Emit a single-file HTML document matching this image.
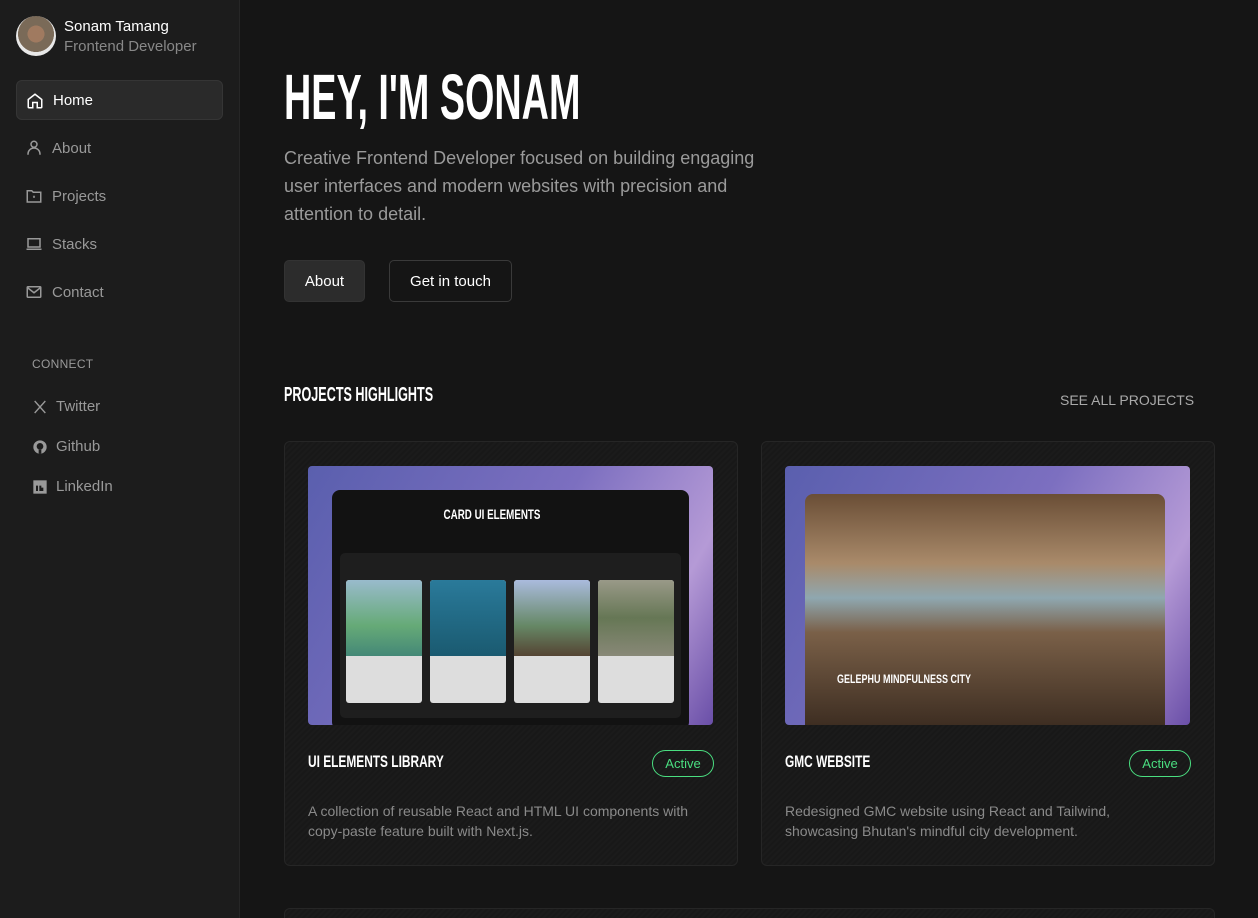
<!DOCTYPE html>
<html><head><meta charset="utf-8"><style>
*{box-sizing:border-box;margin:0;padding:0}
html,body{width:1258px;height:918px;overflow:hidden}
body{background:#151515;font-family:"Liberation Sans",sans-serif;color:#eee;position:relative}
.side{position:absolute;left:0;top:0;width:240px;height:918px;background:#1c1c1c;border-right:1px solid #262626}
.av{position:absolute;left:16px;top:16px;width:40px;height:40px;border-radius:50%;background:radial-gradient(circle at 50% 45%,#a07a60 0 28%,#7a6a58 29% 60%,#e8e8e8 61%)}
.nm{position:absolute;left:64px;top:18px;font-size:15px;color:#fff}
.rl{position:absolute;left:64px;top:38px;font-size:15px;color:#888}
.nav{position:absolute;left:16px;width:207px;height:40px;border-radius:6px;font-size:15px;color:#999;display:flex;align-items:center;padding-left:36px}
.nav.on{background:#2a2a2a;border:1px solid #353535;color:#fff}
.nav svg{position:absolute;left:9px;top:11px}
.cn{position:absolute;left:32px;top:357px;font-size:12px;color:#999;letter-spacing:.3px}
.so{position:absolute;left:56px;font-size:15px;color:#999}
.so svg{position:absolute;left:-24px;top:1px}
.cond{font-weight:bold;display:inline-block;transform-origin:left top;white-space:nowrap}
h1{position:absolute;left:284px;top:60px;font-size:64px;color:#fff;transform:scaleX(.59)}
.p{position:absolute;left:284px;top:144px;width:495px;font-size:18px;line-height:28px;color:#9a9a9a}
.b{position:absolute;top:260px;height:42px;border-radius:5px;font-size:15px;color:#fff;display:flex;align-items:center;justify-content:center}
.ph{position:absolute;left:284px;top:384px;font-size:20px;color:#fff;transform:scaleX(.63)}
.sa{position:absolute;left:1060px;top:392px;font-size:14px;color:#aaa}
.card{position:absolute;top:441px;width:454px;height:425px;border:1px solid #262626;border-radius:6px;background:repeating-linear-gradient(135deg,#1b1b1b 0 2px,#181818 2px 4px)}
.img{position:absolute;left:23px;top:24px;width:405px;height:259px;border-radius:4px;overflow:hidden}
.ct{position:absolute;left:23px;top:310px;font-size:17px;color:#fff;transform:scaleX(.7)}
.bd{position:absolute;left:367px;top:308px;width:62px;height:27px;border:1px solid #4ade80;border-radius:14px;color:#4ade80;font-size:13px;display:flex;align-items:center;justify-content:center}
.cd{position:absolute;left:23px;top:359px;font-size:14px;line-height:20px;color:#8a8a8a;width:385px}
</style></head><body>
<div class="side">
<div class="av"></div><div class="nm">Sonam Tamang</div><div class="rl">Frontend Developer</div>
<div class="nav on" style="top:80px"><svg width="18" height="18" viewBox="0 0 24 24" fill="none" stroke="#fff" stroke-width="2"><path d="M3 10l9-7 9 7v10a1 1 0 0 1-1 1h-5v-7h-6v7H4a1 1 0 0 1-1-1z"/></svg>Home</div>
<div class="nav" style="top:128px"><svg width="18" height="18" viewBox="0 0 24 24" fill="none" stroke="#999" stroke-width="2"><circle cx="12" cy="7" r="4"/><path d="M4 21v-1a7 7 0 0 1 16 0v1"/></svg>About</div>
<div class="nav" style="top:176px"><svg width="18" height="18" viewBox="0 0 24 24" fill="none" stroke="#999" stroke-width="2"><path d="M3 5h6l2 2h10v13H3z"/><circle cx="12" cy="13" r=".5"/></svg>Projects</div>
<div class="nav" style="top:224px"><svg width="18" height="18" viewBox="0 0 24 24" fill="none" stroke="#999" stroke-width="2"><rect x="4" y="5" width="16" height="11"/><path d="M2 19h20"/></svg>Stacks</div>
<div class="nav" style="top:272px"><svg width="18" height="18" viewBox="0 0 24 24" fill="none" stroke="#999" stroke-width="2"><rect x="3" y="5" width="18" height="14" rx="1"/><path d="M3 6l9 7 9-7"/></svg>Contact</div>
<div class="cn">CONNECT</div>
<div class="so" style="top:398px"><svg width="16" height="16" viewBox="0 0 24 24" fill="none" stroke="#999" stroke-width="2"><path d="M4 3l16 18M20 3L4 21"/></svg>Twitter</div>
<div class="so" style="top:438px"><svg width="16" height="16" viewBox="0 0 24 24"><circle cx="12" cy="12" r="10" fill="#999"/><circle cx="12" cy="11" r="5" fill="#1c1c1c"/><path d="M10 16h4v6h-4z" fill="#1c1c1c"/></svg>Github</div>
<div class="so" style="top:478px"><svg width="16" height="16" viewBox="0 0 24 24"><rect x="2" y="2" width="20" height="20" fill="#999"/><path d="M6 10h3v8H6zM11 10h3v8h-3zM14 13h3v5h-3z" fill="#1c1c1c"/></svg>LinkedIn</div>
</div>
<h1 class="cond">HEY, I'M SONAM</h1>
<div class="p">Creative Frontend Developer focused on building engaging user interfaces and modern websites with precision and attention to detail.</div>
<div class="b" style="left:284px;width:81px;background:#2c2c2c;border:1px solid #333">About</div>
<div class="b" style="left:389px;width:123px;border:1px solid #3a3a3a">Get in touch</div>
<div class="ph cond">PROJECTS HIGHLIGHTS</div>
<div class="sa">SEE ALL PROJECTS</div>
<div class="card" style="left:284px"><div class="img" style="background:linear-gradient(120deg,#5a5fae,#7c6fc0 50%,#b59ad6 80%,#6a4fa8)">
<div style="position:absolute;left:24px;top:24px;width:357px;height:240px;background:#121212;border-radius:8px">
<div class="cond" style="position:absolute;left:160px;top:16px;font-size:14px;color:#fff;transform:scaleX(.7) translateX(-50%)">CARD UI ELEMENTS</div>
<div style="position:absolute;left:8px;top:63px;width:341px;height:165px;background:#1e1e1e;border-radius:5px">
<div style="position:absolute;left:6px;top:27px;width:76px;height:123px;background:#ddd;border-radius:3px;overflow:hidden"><div style="height:76px;background:linear-gradient(#9bc 0,#6a7 60%,#487)"></div></div>
<div style="position:absolute;left:90px;top:27px;width:76px;height:123px;background:#ddd;border-radius:3px;overflow:hidden"><div style="height:76px;background:linear-gradient(#2a7a9a,#1a5a70)"></div></div>
<div style="position:absolute;left:174px;top:27px;width:76px;height:123px;background:#ddd;border-radius:3px;overflow:hidden"><div style="height:76px;background:linear-gradient(#abd,#686 60%,#543)"></div></div>
<div style="position:absolute;left:258px;top:27px;width:76px;height:123px;background:#ddd;border-radius:3px;overflow:hidden"><div style="height:76px;background:linear-gradient(#998,#675 50%,#887)"></div></div>
</div></div></div>
<div class="ct cond">UI ELEMENTS LIBRARY</div><div class="bd">Active</div>
<div class="cd">A collection of reusable React and HTML UI components with copy-paste feature built with Next.js.</div></div>
<div class="card" style="left:761px"><div class="img" style="background:linear-gradient(120deg,#5a5fae,#7c6fc0 50%,#b59ad6 80%,#6a4fa8)">
<div style="position:absolute;left:20px;top:28px;width:360px;height:231px;border-radius:8px 8px 0 0;background:linear-gradient(180deg,#6a4e36 0,#a98a6a 30%,#8fa7b0 45%,#7a6048 60%,#3e2e22 100%)">
<div class="cond" style="position:absolute;left:32px;top:178px;font-size:12px;color:#fff;transform:scaleX(.75)">GELEPHU MINDFULNESS CITY</div></div></div>
<div class="ct cond">GMC WEBSITE</div><div class="bd">Active</div>
<div class="cd">Redesigned GMC website using React and Tailwind, showcasing Bhutan's mindful city development.</div></div>
<div class="card" style="left:284px;top:908px;width:931px;height:10px;border-bottom:none;border-radius:6px 6px 0 0"></div>
</body></html>
